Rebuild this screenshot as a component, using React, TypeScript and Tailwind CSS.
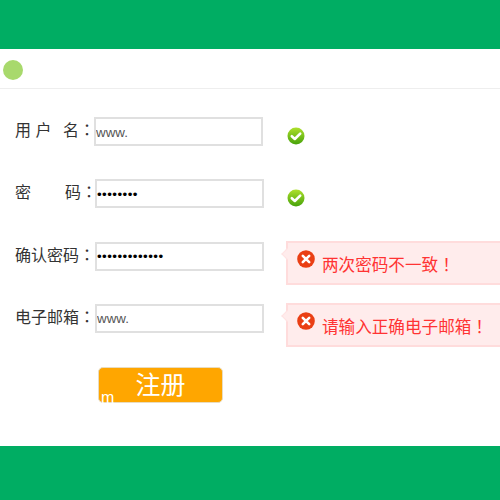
const CheckIcon = ({ id }: { id: string }) => (
  <svg width="18" height="18" viewBox="0 0 18 18" className="block">
    <defs>
      <linearGradient id={id} x1="0" y1="0" x2="0" y2="1">
        <stop offset="0" stopColor="#aee02c" />
        <stop offset="1" stopColor="#46a20a" />
      </linearGradient>
    </defs>
    <circle cx="9" cy="9" r="8.5" fill={`url(#${id})`} />
    <path d="M4.8 9.2 L7.8 12 L13.2 6.6" fill="none" stroke="#fff" strokeWidth="2.6" strokeLinecap="round" strokeLinejoin="round" />
  </svg>
);

const ErrorIcon = () => (
  <svg width="18" height="18" viewBox="0 0 18 18" className="block shrink-0">
    <circle cx="9" cy="9" r="8.8" fill="#ea3f14" />
    <path d="M5.8 5.8 L12.2 12.2 M12.2 5.8 L5.8 12.2" fill="none" stroke="#fff" strokeWidth="2.6" strokeLinecap="round" />
  </svg>
);

const Punct = ({ children }: { children: string }) => (
  <span className="font-['Noto_Sans_CJK_TC',sans-serif]">{children}</span>
);

const Tip = ({ text }: { text: string }) => (
  <div className="relative -mt-px ml-[22px] flex h-[44px] flex-1 items-start border-2 border-r-0 border-[#ffdcdc] bg-[#ffecec] pl-[9px] pt-[7px]">
    <span className="absolute left-[-5px] top-[7px] h-[8px] w-[8px] rotate-45 border-b border-l border-[#ffe3e3] bg-[#ffecec]" />
    <ErrorIcon />
    <span className="ml-[7px] mt-[2px] text-[16.6px] leading-[24px] text-[#ff3333]">
      {text}
      <Punct>！</Punct>
    </span>
  </div>
);

type FieldProps = {
  label: React.ReactNode;
  type?: string;
  value: string;
  children: React.ReactNode;
  inset?: boolean;
};

const Field = ({ label, type = "text", value, children, inset }: FieldProps) => (
  <div className="flex h-[62.3px] items-start">
    <label className={`shrink-0 whitespace-pre pl-[15px] text-[16px] leading-[25px] text-[#333] ${inset ? "w-[95px]" : "w-[94px]"}`}>
      {label}
      <Punct>：</Punct>
    </label>
    <input
      readOnly
      type={type}
      value={value}
      className={`h-[29px] w-[169px] shrink-0 border-2 border-[#e0e0e0] bg-white pt-px outline-none ${
        type === "password" ? "text-[13.33px] tracking-[0.45px] text-black" : "text-[13.33px] text-[#555]"
      }`}
    />
    {children}
  </div>
);

export default function App() {
  return (
    <div className="flex h-[500px] w-[500px] flex-col overflow-hidden bg-white font-['Liberation_Sans','Noto_Sans_CJK_SC',sans-serif]">
      <div className="h-[49px] shrink-0 bg-[#00ad63]" />
      <div className="flex h-[40px] shrink-0 items-center border-b border-[#eeeeee] pl-[3px] pt-[2px]">
        <div className="h-[20px] w-[20px] rounded-full bg-[#a8d96c]" />
      </div>
      <form className="flex-1 pt-[28px]">
        <Field
          label={
            <>
              用<span className="inline-block w-[4.5px]" />户<span className="inline-block w-[11.5px]" />名
            </>
          }
          value="www."
        >
          <div className="ml-[24px] mt-[10px]"><CheckIcon id="ok-a" /></div>
        </Field>
        <Field
          label={
            <>
              密<span className="inline-block w-[34px]" />码
            </>
          }
          type="password"
          value="12345678"
          inset
        >
          <div className="ml-[23px] mt-[10px]"><CheckIcon id="ok-b" /></div>
        </Field>
        <Field label="确认密码" type="password" value="1234567890123" inset>
          <Tip text="两次密码不一致" />
        </Field>
        <Field label="电子邮箱" value="www." inset>
          <Tip text="请输入正确电子邮箱" />
        </Field>
        <div className="pl-[98px] pt-[1px]">
          <button type="button" className="relative h-[36px] w-[125px] rounded-[5px] border border-[#e8dcc0] bg-[#ffa600] text-[25px] leading-[30px] text-white">
            注册
            <span className="absolute bottom-[-4px] left-[2px] text-[16px] leading-[16px]">m</span>
          </button>
        </div>
      </form>
      <div className="h-[54px] shrink-0 bg-[#00ad63]" />
    </div>
  );
}
